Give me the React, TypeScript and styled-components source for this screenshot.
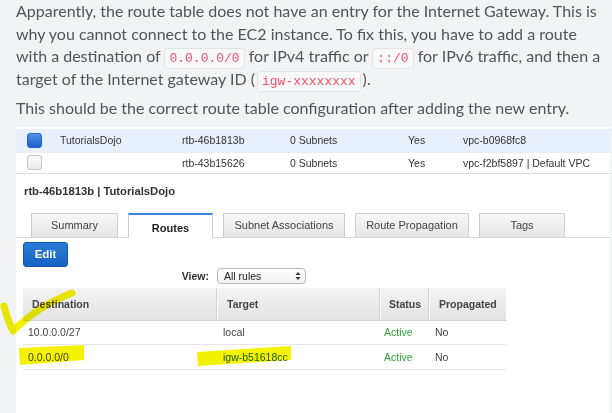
import React from "react";
import styled, { createGlobalStyle } from "styled-components";

const Global = createGlobalStyle`
  html, body { margin: 0; padding: 0; }
  body {
    background: #f2f3f4;
    overflow: hidden;
    width: 612px;
    height: 413px;
  }
`;

const Root = styled.div`
  position: relative;
  width: 612px;
  height: 413px;
  overflow: hidden;
`;

const Article = styled.div`
  display: flex;
  flex-direction: column;
  padding: 0 2px 0 16px;
  height: 413px;
  box-sizing: border-box;
`;

const Para = styled.p`
  margin: 0 0 7px;
  font-family: Lato, "Liberation Sans", sans-serif;
  font-size: 16px;
  line-height: 22.5px;
  color: #515459;
  white-space: nowrap;
`;

const Code = styled.code<{ $tight?: boolean }>`
  font-family: "Liberation Mono", monospace;
  font-size: 13px;
  line-height: 15px;
  color: #f0506e;
  background: #f8f8f8;
  border: 1px solid #e3e3e3;
  border-radius: 3px;
  padding: 2px 4px;
  margin: 0 ${(p) => (p.$tight ? 2 : 0)}px;
`;

const Shot = styled.div`
  flex: 1;
  background: #fff;
  width: 594px;
  font-family: "Liberation Sans", Arial, sans-serif;
  color: #333;
  padding-top: 2px;
  box-sizing: border-box;
`;

const VpcRow = styled.div<{ $selected?: boolean }>`
  display: grid;
  grid-template-columns: 44px 122px 108px 118px 55px 1fr;
  align-items: center;
  height: ${(p) => (p.$selected ? 23 : 20)}px;
  background: ${(p) => (p.$selected ? "#e8f0fb" : "#fff")};
  border-bottom: 1px solid ${(p) => (p.$selected ? "#e9edf2" : "#dcdcdc")};
  font-size: 10.5px;
  color: #333;
  white-space: nowrap;
`;

const CheckCell = styled.div`
  padding-left: 11px;
  display: flex;
  align-items: center;
`;

const Check = styled.span<{ $on?: boolean }>`
  display: block;
  width: 13px;
  height: 13px;
  border-radius: 3px;
  border: 1px solid ${(p) => (p.$on ? "#2863c2" : "#c4c4c4")};
  background: ${(p) =>
    p.$on
      ? "linear-gradient(#4a8fe8, #1c62cc)"
      : "linear-gradient(#fbfbfb, #e9e9e9)"};
`;

const DetailTitle = styled.div`
  margin-top: 10px;
  padding-left: 8px;
  font-size: 11.25px;
  font-weight: bold;
  color: #333;
  line-height: 14px;
`;

const TabBar = styled.div`
  display: flex;
  align-items: flex-end;
  gap: 10px;
  margin-top: 15px;
  padding-left: 15px;
  height: 24px;
  border-bottom: 1px solid #d6d6d6;
`;

const Tab = styled.div<{ $active?: boolean; $w: number }>`
  width: ${(p) => p.$w}px;
  height: ${(p) => (p.$active ? 25 : 24)}px;
  box-sizing: border-box;
  display: flex;
  align-items: center;
  justify-content: center;
  font-size: 11px;
  color: ${(p) => (p.$active ? "#222" : "#444")};
  font-weight: ${(p) => (p.$active ? "bold" : "normal")};
  padding-top: ${(p) => (p.$active ? 4 : 0)}px;
  border: 1px solid #cfcfcf;
  border-top: ${(p) => (p.$active ? "2px solid #3b8ad9" : "1px solid #cfcfcf")};
  border-bottom: none;
  background: ${(p) =>
    p.$active ? "#fff" : "linear-gradient(#f7f7f7, #e6e6e6)"};
  margin-bottom: ${(p) => (p.$active ? -1 : 0)}px;
  white-space: nowrap;
`;

const TabBody = styled.div`
  padding-left: 7px;
`;

const EditButton = styled.button`
  margin-top: 4px;
  width: 45px;
  height: 25px;
  border: 1px solid #1557a8;
  border-radius: 3px;
  background: linear-gradient(#2a7bd6, #1563c2);
  color: #fff;
  font-family: "Liberation Sans", Arial, sans-serif;
  font-weight: bold;
  font-size: 11.5px;
  padding: 0;
`;

const ViewRow = styled.div`
  display: grid;
  grid-template-columns: 194px 89px;
  align-items: center;
  margin-top: 1px;
  height: 16px;
`;

const ViewLabel = styled.span`
  text-align: right;
  padding-right: 8px;
  font-size: 10.5px;
  font-weight: bold;
  color: #333;
`;

const Select = styled.div`
  height: 16px;
  box-sizing: border-box;
  border: 1px solid #b9b9b9;
  border-radius: 4px;
  background: linear-gradient(#fff, #f2f2f2);
  display: flex;
  align-items: center;
  justify-content: space-between;
  padding: 0 4px 0 6px;
  font-size: 10.5px;
  color: #222;
`;

const Table = styled.div`
  margin-top: 4px;
  width: 483px;
`;

const HeadRow = styled.div`
  display: grid;
  grid-template-columns: 194px 163px 49px 77px;
  height: 33px;
  background: linear-gradient(#f4f4f4, #e3e3e3);
  border-bottom: 1px solid #d0d0d0;
  box-sizing: border-box;
`;

const HeadCell = styled.div<{ $pad: number; $last?: boolean }>`
  display: flex;
  align-items: center;
  padding-left: ${(p) => p.$pad}px;
  font-size: 10.5px;
  font-weight: bold;
  color: #444;
  border-right: ${(p) => (p.$last ? "none" : "1px solid #d4d4d4")};
  box-shadow: ${(p) => (p.$last ? "none" : "1px 0 0 #fafafa")};
`;

const BodyRow = styled.div<{ $h: number }>`
  display: grid;
  grid-template-columns: 194px 163px 49px 77px;
  height: ${(p) => p.$h}px;
  border-bottom: 1px solid #e6e6e6;
  box-sizing: border-box;
  align-items: center;
  font-size: 10.5px;
  color: #444;
`;

const Cell = styled.div<{ $pad: number; $tone?: "green" | "link" }>`
  padding-left: ${(p) => p.$pad}px;
  color: ${(p) =>
    p.$tone === "green" ? "#34a23a" : p.$tone === "link" ? "#1d5fc4" : "#444"};
`;

const Marks = styled.svg`
  position: absolute;
  left: 0;
  top: 0;
  pointer-events: none;
  mix-blend-mode: multiply;
`;

const tabs = [
  { label: "Summary", w: 87 },
  { label: "Routes", w: 85, active: true },
  { label: "Subnet Associations", w: 122 },
  { label: "Route Propagation", w: 114 },
  { label: "Tags", w: 86 },
];

const routes = [
  { dest: "10.0.0.0/27", target: "local", link: false, h: 24 },
  { dest: "0.0.0.0/0", target: "igw-b51618cc", link: true, h: 25 },
];

export default function App() {
  return (
    <Root>
      <Global />
      <Article>
        <Para>
          Apparently, the route table does not have an entry for the Internet Gateway. This is
          <br />
          why you cannot connect to the EC2 instance. To fix this, you have to add a route
          <br />
          with a destination of <Code>0.0.0.0/0</Code> for IPv4 traffic or <Code>::/0</Code> for
          IPv6 traffic, and then a
          <br />
          target of the Internet gateway ID (<Code $tight>igw-xxxxxxxx</Code>).
        </Para>
        <Para>This should be the correct route table configuration after adding the new entry.</Para>
        <Shot>
          <VpcRow $selected>
            <CheckCell>
              <Check $on />
            </CheckCell>
            <span>TutorialsDojo</span>
            <span>rtb-46b1813b</span>
            <span>0 Subnets</span>
            <span>Yes</span>
            <span>vpc-b0968fc8</span>
          </VpcRow>
          <VpcRow>
            <CheckCell>
              <Check />
            </CheckCell>
            <span></span>
            <span>rtb-43b15626</span>
            <span>0 Subnets</span>
            <span>Yes</span>
            <span>vpc-f2bf5897 | Default VPC</span>
          </VpcRow>
          <DetailTitle>rtb-46b1813b | TutorialsDojo</DetailTitle>
          <TabBar>
            {tabs.map((t) => (
              <Tab key={t.label} $w={t.w} $active={t.active}>
                {t.label}
              </Tab>
            ))}
          </TabBar>
          <TabBody>
            <EditButton>Edit</EditButton>
            <ViewRow>
              <ViewLabel>View:</ViewLabel>
              <Select>
                <span>All rules</span>
                <svg width="6" height="10" viewBox="0 0 6 10">
                  <path d="M3 1 L5.5 4 H0.5 Z M3 9 L5.5 6 H0.5 Z" fill="#333" />
                </svg>
              </Select>
            </ViewRow>
            <Table>
              <HeadRow>
                <HeadCell $pad={9}>Destination</HeadCell>
                <HeadCell $pad={10}>Target</HeadCell>
                <HeadCell $pad={9}>Status</HeadCell>
                <HeadCell $pad={10} $last>
                  Propagated
                </HeadCell>
              </HeadRow>
              {routes.map((r) => (
                <BodyRow key={r.dest} $h={r.h}>
                  <Cell $pad={5}>{r.dest}</Cell>
                  <Cell $pad={6} $tone={r.link ? "link" : undefined}>
                    {r.target}
                  </Cell>
                  <Cell $pad={4} $tone="green">
                    Active
                  </Cell>
                  <Cell $pad={6}>No</Cell>
                </BodyRow>
              ))}
            </Table>
          </TabBody>
        </Shot>
      </Article>
      <Marks width="612" height="413" viewBox="0 0 612 413">
        <path
          d="M4 306 Q8 321 13 331 Q38 306 72 293"
          fill="none"
          stroke="#f5f200"
          strokeWidth="7"
          strokeLinecap="round"
          strokeLinejoin="round"
        />
        <polygon points="19,348 84,345 84,360 20,365" fill="#f5f200" />
        <polygon points="197,352 291,346 291,360 198,366" fill="#f5f200" />
      </Marks>
    </Root>
  );
}
